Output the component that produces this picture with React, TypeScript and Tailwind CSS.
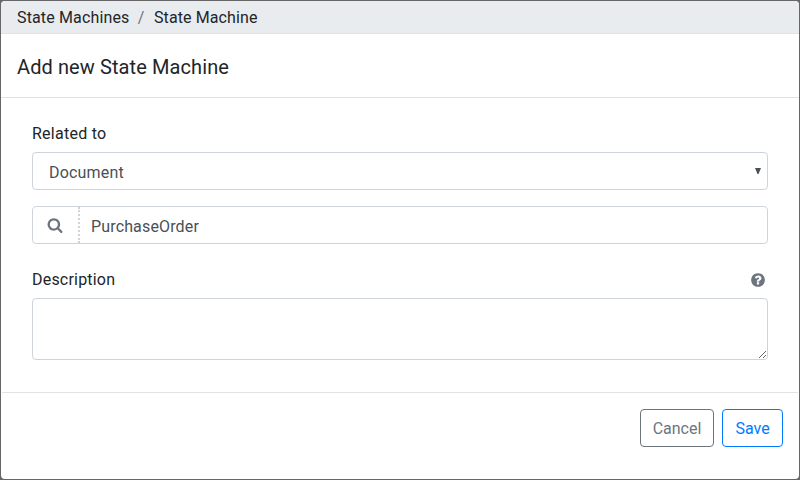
function SearchIcon() {
  return (
    <svg className="mr-px h-4 w-4" viewBox="0 0 1792 1792" fill="currentColor" aria-hidden="true">
      <path d="M1216 832q0-185-131.5-316.5t-316.5-131.5-316.5 131.5-131.5 316.5 131.5 316.5 316.5 131.5 316.5-131.5 131.5-316.5zm512 832q0 52-38 90t-90 38q-54 0-90-38l-343-342q-179 124-399 124-143 0-273.5-55.5t-225-150-150-225-55.5-273.5 55.5-273.5 150-225 225-150 273.5-55.5 273.5 55.5 225 150 150 225 55.5 273.5q0 220-124 399l343 343q37 37 37 90z" />
    </svg>
  );
}

function HelpIcon() {
  return (
    <svg className="mr-0.5 mb-px h-4 w-4 text-[#6c757d]" viewBox="0 0 1792 1792" fill="currentColor" aria-hidden="true">
      <path d="M1024 1376v-192q0-14-9-23t-23-9h-192q-14 0-23 9t-9 23v192q0 14 9 23t23 9h192q14 0 23-9t9-23zm256-672q0-88-55.5-163t-138.5-116-170-41q-243 0-371 213-15 24 8 42l132 100q7 6 19 6 16 0 25-12 53-68 86-92 34-24 86-24 48 0 85.5 26t37.5 59q0 38-20 61t-68 45q-63 28-115.5 86.5t-52.5 125.5v36q0 14 9 23t23 9h192q14 0 23-9t9-23q0-19 21.5-49.5t54.5-49.5q32-18 49-28.5t46-35 44.5-48 28-60.5 12.5-81zm384 192q0 209-103 385.5t-279.5 279.5-385.5 103-385.5-103-279.5-279.5-103-385.5 103-385.5 279.5-279.5 385.5-103 385.5 103 279.5 279.5 103 385.5z" />
    </svg>
  );
}

export default function App() {
  return (
    <div className="h-[480px] w-[800px] overflow-hidden bg-[#666668] p-px font-['Roboto','Liberation_Sans',sans-serif] text-base text-[#212529]">
      <div className="flex h-[478px] flex-col overflow-hidden rounded bg-white">
        <nav className="flex h-[33px] shrink-0 items-center border-b border-[#dee2e6] bg-[#e9ecef] px-4 pt-0.5">
          <span className="w-28 whitespace-nowrap tracking-[0.14px]">State Machines</span>
          <span className="w-[25px] pr-px text-center text-[#6c757d]">/</span>
          <span className="whitespace-nowrap tracking-[0.1px]">State Machine</span>
        </nav>
        <header className="flex h-16 shrink-0 items-center border-b border-[#dee2e6] px-4 pt-0.5">
          <h1 className="whitespace-nowrap text-xl tracking-[0.1px]">Add new State Machine</h1>
        </header>
        <main className="flex h-[294px] shrink-0 flex-col px-[31px] pt-6">
          <label htmlFor="related" className="mb-1.5 h-6 leading-6 tracking-[0.25px]">Related to</label>
          <div className="grid h-[38px] shrink-0 items-center">
            <select
              id="related"
              className="col-start-1 row-start-1 h-[38px] w-full appearance-none rounded border border-[#ced4da] bg-white px-4 pt-[3px] tracking-[0.2px] text-[#495057]"
            >
              <option>Document</option>
            </select>
            <svg className="pointer-events-none col-start-1 row-start-1 mr-[7px] h-1.5 w-1.5 justify-self-end" viewBox="0 0 6 6">
              <path d="M0 0h6L3.5 6h-1z" fill="#495057" />
            </svg>
          </div>
          <div className="mt-4 flex h-[38px] shrink-0 overflow-hidden rounded border border-[#ced4da]">
            <span className="flex w-[47px] items-center justify-center border-r-2 border-dotted border-[#ced4da] text-[#6c757d]">
              <SearchIcon />
            </span>
            <input
              className="min-w-0 flex-1 px-[11px] pt-[3px] tracking-[0.15px] text-[#495057] outline-none"
              defaultValue="PurchaseOrder"
            />
          </div>
          <div className="mt-6 mb-1.5 flex h-6 items-center justify-between">
            <label htmlFor="description" className="tracking-[0.2px]">Description</label>
            <HelpIcon />
          </div>
          <textarea id="description" className="h-[62px] w-full shrink-0 rounded border border-[#ced4da] px-3 py-1.5" />
        </main>
        <footer className="mx-px flex justify-end gap-2 border-t border-[#e1e4e7] px-[15px] pt-4">
          <button className="h-[38px] w-[74px] rounded border border-[#6c757d] pt-0.5 text-[#6c757d]">Cancel</button>
          <button className="h-[38px] w-[61px] rounded border border-[#007bff] pt-0.5 text-[#007bff]">Save</button>
        </footer>
      </div>
    </div>
  );
}
